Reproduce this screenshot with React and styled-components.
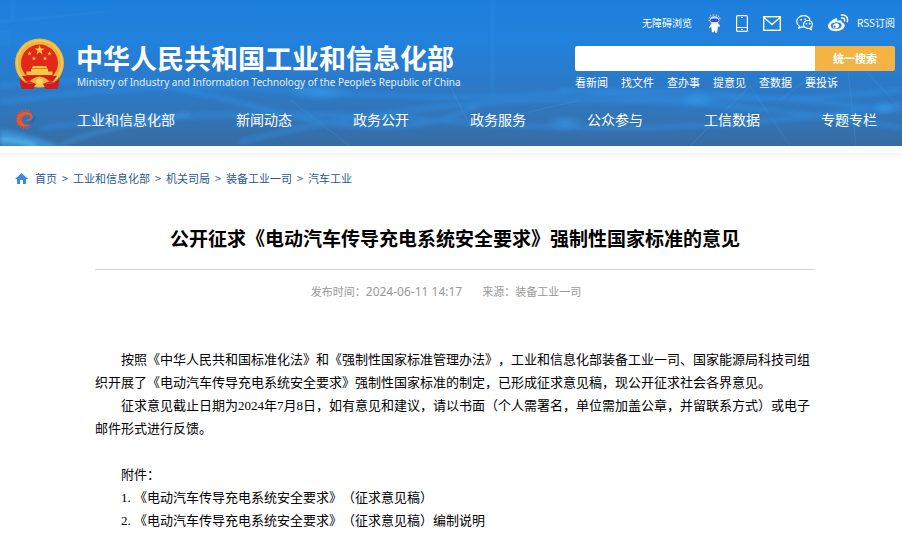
import React from "react";
import styled, { createGlobalStyle } from "styled-components";

const sans = '"Noto Sans CJK SC", "Noto Sans", sans-serif';

const Global = createGlobalStyle`
  * { box-sizing: border-box; }
  body { margin: 0; background: #fff; color: #000; font-family: ${sans}; text-spacing-trim: space-all; }
  a { color: inherit; text-decoration: none; }
  a:hover { text-decoration: underline; }
  h1, p, ul, ol { margin: 0; padding: 0; }
  ul, ol { list-style: none; }
`;

const Header = styled.header`
  position: relative;
  overflow: hidden;
  color: #fff;
  background: linear-gradient(180deg, #1d7fdd 0%, #2181dc 28%, #2b7aca 55%, #3275b9 78%, #376ca3 100%);
`;

const Backdrop = styled.svg`
  position: absolute;
  inset: 0;
  width: 100%;
  height: 100%;
`;

const HeaderInner = styled.div`
  position: relative;
  padding: 12px 7px 15px 15px;
`;

const Masthead = styled.div`
  display: flex;
  justify-content: space-between;
  align-items: flex-start;
`;

const Brand = styled.a`
  display: flex;
  gap: 12px;
  padding-top: 26px;
  && { text-decoration: none; }
`;

const BrandText = styled.span`
  display: flex;
  flex-direction: column;
  padding-top: 3px;
`;

const BrandName = styled.span`
  font-size: 27px;
  line-height: 34px;
  font-weight: 700;
  white-space: nowrap;
`;

const BrandEnglish = styled.span`
  padding-left: 1px;
  font-family: "Noto Sans", sans-serif;
  font-size: 10px;
  line-height: 14px;
  color: #e2f0fd;
  white-space: nowrap;
`;

const Tools = styled.div`
  width: 320px;
`;

const Utility = styled.div`
  display: flex;
  justify-content: flex-end;
  align-items: center;
  height: 22px;
  font-size: 10px;
  line-height: 16px;
  white-space: nowrap;
`;

const UtilityIcons = styled.span`
  display: flex;
  align-items: center;
  gap: 15px;
  margin: 0 8px 0 16px;
  a { display: flex; }
`;

const Search = styled.form`
  display: flex;
  height: 25px;
  margin-top: 12px;
`;

const SearchInput = styled.input`
  flex: 1;
  min-width: 0;
  border: 0;
  border-radius: 2px 0 0 2px;
  padding: 0 8px;
  font: 11px ${sans};
  background: #fff;
`;

const SearchButton = styled.button`
  width: 80px;
  border: 0;
  border-radius: 0 2px 2px 0;
  padding: 0 0 2px;
  background: #f3b445;
  color: #fff;
  font: 700 11px ${sans};
`;

const QuickLinks = styled.ul`
  display: flex;
  gap: 13px;
  margin-top: 3px;
  font-size: 11px;
  line-height: 16px;
`;

const Nav = styled.nav`
  display: flex;
  align-items: center;
  margin-top: 17px;
  height: 24px;
`;

const NavList = styled.ul`
  display: flex;
  gap: 61px;
  margin-left: 41px;
  font-size: 14px;
  line-height: 24px;
  white-space: nowrap;
`;

const Breadcrumb = styled.nav`
  margin-top: 7px;
  padding: 14px 15px 0;
  display: flex;
  align-items: center;
  gap: 7px;
  background: linear-gradient(180deg, #f0f5fa, #fff 6px);
`;

const Crumbs = styled.ol`
  display: flex;
  font-size: 11px;
  line-height: 22px;
  color: #1f5a92;
  li + li::before {
    content: ">";
    display: inline-block;
    width: 16px;
    text-align: center;
  }
`;

const Article = styled.main`
  max-width: 750px;
  margin: 0 auto;
  padding: 33px 11px 20px 19px;
`;

const Title = styled.h1`
  font-size: 19px;
  line-height: 32px;
  font-weight: 700;
  text-align: center;
  padding-bottom: 15px;
  border-bottom: 1px solid #d5d5d5;
`;

const Meta = styled.div`
  display: flex;
  justify-content: center;
  gap: 20px;
  margin: 10px 18px 0 0;
  font-size: 11px;
  line-height: 22px;
  color: #999;
  time { font: 12px "Noto Sans", sans-serif; }
`;

const Body = styled.div`
  margin-top: 46px;
  font-family: "Liberation Serif", "Noto Sans CJK SC", serif;
  font-size: 13px;
  line-height: 23px;
  p { text-indent: 26px; }
`;

const Attachments = styled.section`
  margin-top: 23px;
  padding-left: 26px;
  && p { text-indent: 0; }
  li { display: flex; }
`;

const Marker = styled.span`
  width: 13px;
`;

const Emblem = () => (
  <svg width="49" height="52" viewBox="0 0 49 52" aria-hidden="true">
    <path d="M7 37 Q4 44 7 50 L15 51 L24 48 L34 51 L42 50 Q45 43 42 37Z" fill="#c9171c" />
    <circle cx="24.500" cy="25" r="24.500" fill="#eeb53c" />
    <circle cx="24.500" cy="25" r="22.500" fill="none" stroke="#f5cb58" strokeWidth="1.500" />
    <circle cx="24.500" cy="25" r="18.500" fill="#e32719" />
    <path d="M24.500 7l1.300 3.500h3.700l-3 2.300 1.100 3.600-3.100-2.200-3.100 2.200 1.100-3.600-3-2.300h3.700z" fill="#f7c842" />
    {[[14.5, 15.5], [34.5, 15.5], [19, 20.5], [30, 20.5]].map(([x, y]) => (
      <path key={x} transform={`translate(${x} ${y})`} d="M0-2.200l.6 1.500h1.600L.9.400l.5 1.600L0 1l-1.400 1 .5-1.600-1.300-1.100h1.600z" fill="#f7c842" />
    ))}
    <path d="M18 28h13l1.500 2.500h-16zM16 31h17v2.500h4.500V37h-26v-3.500H16z" fill="#f7c842" />
    <path d="M7 38h35l-4 5.500-7-1.500-6.500 2-6.500-2-7 1.500z" fill="#d42018" />
    <path d="M16 42q8.500-7 17 0l-2 5q-6.500-4-13 0z" fill="#eeb53c" />
    <circle cx="24.500" cy="43.500" r="3" fill="#f8d56b" />
    <path d="M5 39q1 7 9 4l7 3-3 5q-6-1-11 0-3-6-2-12zM44 39q-1 7-9 4l-7 3 3 5q6-1 11 0 3-6 2-12z" fill="#cf1c1c" />
    <path d="M9 44q5 2 9 1M40 44q-5 2-9 1" stroke="#ef5a35" fill="none" />
  </svg>
);

const GearLogo = () => (
  <svg width="21" height="20" viewBox="0 0 21 20" aria-hidden="true">
    <path d="M14.500 2.300A8.800 8.800 0 1 0 15 17.700" fill="none" stroke="#d8532f" strokeWidth="2.200" strokeDasharray="1.700 1.500" />
    <path d="M15.500 4C9 1 2 4 2 10.300c0 6.700 7 9.200 13.500 5.700-4.500.3-9-1.300-9-5.200 0-2.800 2.500-4.800 6-4.800 3.200 0 3.700 2.800 1.500 4.300-1.200.8-3 .9-4.500.7 1 1.400 7.500 1.200 8-2.600.2-1.800-.5-3.400-2-4.400z" fill="#f0552a" />
    <path d="M14.500 12.500c3-1.300 4.700-3.700 6.500-7 .2 5-2 8.300-6.500 9z" fill="#1670b8" />
  </svg>
);

const Robot = () => (
  <svg width="13" height="21" viewBox="0 0 14 21" aria-hidden="true">
    <path d="M1.500 8Q.5 1.300 7 1.300T12.500 8" fill="none" stroke="#cfc083" strokeWidth="1.800" strokeDasharray="1.300 1.500" />
    <path d="M4 10h6.500l2.500 3-1 1.200-1.400-.6-.3 3.900-.8 3H7.700L7 18l-1 2H4.200L3.600 14l-1.800 1.500-.8-1z" fill="#fff" />
    <ellipse cx="7" cy="7" rx="4.900" ry="4.400" fill="#dbe7ff" />
    <rect x="2.800" y="5" width="8.400" height="4" rx="2" fill="#2b41bd" />
    <path d="M4.500 7.200q.8-1 1.500 0M8 7.200q.8-1 1.500 0" stroke="#8fc4ff" strokeWidth=".7" fill="none" />
    <path d="M8.500 19.500h1.500" stroke="#e4c85b" />
  </svg>
);

const Phone = () => (
  <svg width="12" height="17" viewBox="0 0 12 17" fill="none" stroke="#fff" aria-hidden="true">
    <rect x=".600" y=".600" width="10.800" height="15.800" rx="1" strokeWidth="1.200" />
    <path d="M1 12.500h10M5 14.500h2M5 2.500h2" />
  </svg>
);

const Mail = () => (
  <svg width="18" height="15" viewBox="0 0 18 15" fill="none" stroke="#fff" strokeWidth="1.400" aria-hidden="true">
    <rect x=".700" y=".700" width="16.600" height="13.600" />
    <path d="M1 1.500l8 7 8-7" />
  </svg>
);

const Wechat = () => (
  <svg width="17" height="16" viewBox="0 0 17 16" fill="none" stroke="#fff" strokeWidth="1.200" aria-hidden="true">
    <path d="M14 5.300C13.300 2.500 10.800.7 7.500.7 3.700.7.700 3.200.700 6.500c0 2 1 3.500 2.600 4.500l-.6 2.200 2.600-1.300c.8.200 1.500.3 2.300.2" />
    <path d="M12 5.500c2.500 0 4.400 1.700 4.400 4 0 1.300-.6 2.400-1.600 3.100l.4 1.900-2-1.100c-3 .4-5.700-1.300-5.700-3.900 0-2.300 2-4 4.500-4z" />
    <g fill="#fff" stroke="none"><circle cx="5.200" cy="4.700" r=".9" /><circle cx="9.200" cy="4.300" r=".9" /><circle cx="10.500" cy="8.700" r=".9" /><circle cx="13.600" cy="8.700" r=".9" /></g>
  </svg>
);

const Weibo = () => (
  <svg width="21" height="18" viewBox="0 0 21 18" aria-hidden="true">
    <path fill="#fff" fillRule="evenodd" d="M7.500 4.500c1.300-.5 2.300.2 1.700 2.400 2.500-1 5.400-1.100 4.700 1.700 1.700.5 2.800 1.400 2.800 3 0 3.300-4.200 5.700-8.700 5.700-4.400 0-8-2-8-5.200 0-2.700 3.800-6.500 7.500-7.600zM8 8.200c-3 .2-5.400 1.800-5.200 3.900.2 2 2.800 3.200 5.800 3s5.300-2 5.100-4c-.2-1.900-2.700-3.100-5.700-2.900z" />
    <path fill="#fff" fillRule="evenodd" d="M8 9.200c1.900-.3 3.500.8 3.300 2.500-.2 1.600-2 2.900-3.900 2.800-1.800-.1-3-1.500-2.600-3 .3-1.200 1.600-2.100 3.200-2.300zm-1.100 2.300a1.100 1.100 0 1 0 .1 2.100 1.100 1.100 0 0 0-.1-2.100z" />
    <path d="M13.500 1c4-.7 7 2.500 5.800 6.500M13.700 4c2-.4 3.300 1 2.800 3" fill="none" stroke="#fff" strokeWidth="1.500" strokeLinecap="round" />
  </svg>
);

const House = () => (
  <svg width="13" height="11" viewBox="0 0 13 11" aria-hidden="true">
    <path d="M6.500 0L13 6h-2v5H8V7H5v4H2V6H0z" fill="#3c89e8" />
  </svg>
);

const Streaks = () => (
  <Backdrop viewBox="0 0 902 146" preserveAspectRatio="none" aria-hidden="true">
    <defs>
      <filter id="soft" x="-20%" y="-100%" width="140%" height="300%"><feGaussianBlur stdDeviation="2" /></filter>
      <radialGradient id="spot"><stop offset="0" stopColor="#36a0f5" stopOpacity=".55" /><stop offset="1" stopColor="#36a0f5" stopOpacity="0" /></radialGradient>
    </defs>
    <g fill="none" stroke="#2f93ea" strokeWidth="4" opacity=".55" filter="url(#soft)">
      <path d="M0 102Q150 80 300 91T560 93T902 111" />
      <path d="M40 128Q240 104 460 122T902 104" />
      <path d="M240 142Q400 102 560 100T902 128" />
      <path d="M0 86Q120 68 260 108T480 104" />
      <path d="M560 90Q740 108 902 90" />
    </g>
    <path d="M0 129Q40 136 70 150H0z" fill="#3ea5eb" opacity=".6" filter="url(#soft)" />
    <path d="M0 139Q20 140 36 146" fill="none" stroke="#66ccf5" strokeWidth="3" opacity=".8" filter="url(#soft)" />
    <path d="M60 146Q90 130 190 114" fill="none" stroke="#45a4ed" strokeWidth="3" opacity=".5" filter="url(#soft)" />
    <g fill="none" stroke="#68b1ed" strokeWidth="1" opacity=".18">
      <path d="M290 100l60 46M440 66l30 60 110-26M690 146l60-60 40 60M780 100l66-50 56 60M846 50l10 96" />
    </g>
    <g fill="#3796e8" opacity=".16">
      <path d="M0 30h10v16H0zM10 0h5v20h-5zM490 0h5v96h-5zM0 20l110-10v2L0 24z" />
    </g>
    <g fill="url(#spot)">
      <ellipse cx="565" cy="123" rx="20" ry="9" /><ellipse cx="697" cy="100" rx="18" ry="8" />
      <ellipse cx="884" cy="108" rx="14" ry="8" /><ellipse cx="320" cy="92" rx="34" ry="10" />
    </g>
  </Backdrop>
);

const quick = ["看新闻", "找文件", "查办事", "提意见", "查数据", "要投诉"];
const sections = ["工业和信息化部", "新闻动态", "政务公开", "政务服务", "公众参与", "工信数据", "专题专栏"];
const crumbs = ["首页", "工业和信息化部", "机关司局", "装备工业一司", "汽车工业"];
const files = ["《电动汽车传导充电系统安全要求》（征求意见稿）", "《电动汽车传导充电系统安全要求》（征求意见稿）编制说明"];
const channels = [["智能问答", Robot], ["手机版", Phone], ["邮箱", Mail], ["微信", Wechat], ["微博", Weibo]];

export default function App() {
  return (
    <>
      <Global />
      <Header>
        <Streaks />
        <HeaderInner>
          <Masthead>
            <Brand href="#">
              <Emblem />
              <BrandText>
                <BrandName>中华人民共和国工业和信息化部</BrandName>
                <BrandEnglish lang="en">Ministry of Industry and Information Technology of the People’s Republic of China</BrandEnglish>
              </BrandText>
            </Brand>
            <Tools>
              <Utility>
                <a href="#">无障碍浏览</a>
                <UtilityIcons>
                  {channels.map(([label, Icon]) => <a key={label} href="#" aria-label={label}><Icon /></a>)}
                </UtilityIcons>
                <a href="#">RSS订阅</a>
              </Utility>
              <Search onSubmit={(e) => e.preventDefault()}>
                <SearchInput type="text" aria-label="统一搜索" />
                <SearchButton type="submit">统一搜索</SearchButton>
              </Search>
              <QuickLinks>
                {quick.map((t) => <li key={t}><a href="#">{t}</a></li>)}
              </QuickLinks>
            </Tools>
          </Masthead>
          <Nav>
            <GearLogo />
            <NavList>
              {sections.map((t) => <li key={t}><a href="#">{t}</a></li>)}
            </NavList>
          </Nav>
        </HeaderInner>
      </Header>
      <Breadcrumb aria-label="当前位置">
        <House />
        <Crumbs>
          {crumbs.map((t) => <li key={t}><a href="#">{t}</a></li>)}
        </Crumbs>
      </Breadcrumb>
      <Article>
        <Title>公开征求《电动汽车传导充电系统安全要求》强制性国家标准的意见</Title>
        <Meta>
          <span>发布时间：<time dateTime="2024-06-11T14:17">2024-06-11 14:17</time></span>
          <span>来源：装备工业一司</span>
        </Meta>
        <Body>
          <p>按照《中华人民共和国标准化法》和《强制性国家标准管理办法》，工业和信息化部装备工业一司、国家能源局科技司组织开展了《电动汽车传导充电系统安全要求》强制性国家标准的制定，已形成征求意见稿，现公开征求社会各界意见。</p>
          <p>征求意见截止日期为2024年7月8日，如有意见和建议，请以书面（个人需署名，单位需加盖公章，并留联系方式）或电子邮件形式进行反馈。</p>
          <Attachments>
            <p>附件：</p>
            <ol>
              {files.map((t, i) => <li key={t}><Marker>{i + 1}.</Marker><a href="#">{t}</a></li>)}
            </ol>
          </Attachments>
        </Body>
      </Article>
    </>
  );
}
